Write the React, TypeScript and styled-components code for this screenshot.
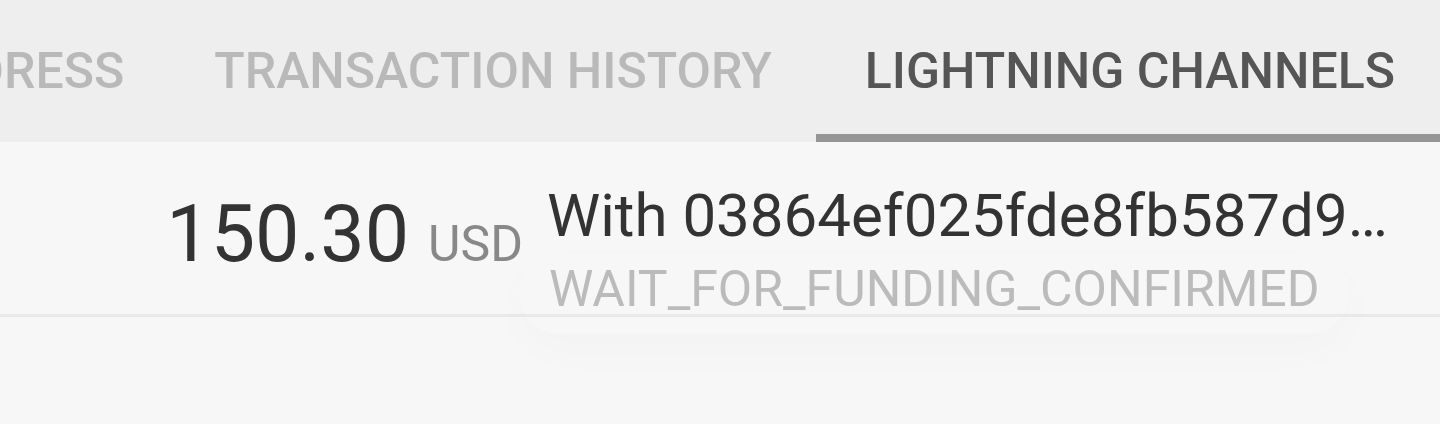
import React from "react";
import styled, { createGlobalStyle } from "styled-components";

const GlobalStyle = createGlobalStyle`
  html, body {
    margin: 0;
    padding: 0;
    background: #f7f7f7;
    font-family: Roboto, "Noto Sans", "Liberation Sans", sans-serif;
  }
  #root {
    width: 1440px;
    height: 424px;
    overflow: hidden;
  }
`;

const Screen = styled.div`
  width: 1440px;
  height: 424px;
  display: flex;
  flex-direction: column;
  background: #f7f7f7;
  overflow: hidden;
`;

const TabBar = styled.div`
  height: 142px;
  flex: none;
  display: flex;
  justify-content: flex-end;
  background: #eeeeee;
  overflow: hidden;
`;

const Tab = styled.div<{ $active?: boolean }>`
  flex: none;
  display: flex;
  align-items: flex-start;
  padding: 39px ${(p) => (p.$active ? 45 : 44)}px 0 ${(p) => (p.$active ? 49 : 46)}px;
  box-sizing: border-box;
  height: 142px;
  font-size: 50px;
  line-height: 64px;
  font-weight: 500;
  color: ${(p) => (p.$active ? "#555555" : "#b9b9b9")};
  border-bottom: 8px solid ${(p) => (p.$active ? "#959595" : "transparent")};
  white-space: nowrap;
`;

const Row = styled.div`
  display: flex;
  align-items: flex-start;
  padding-top: 39px;
  border-bottom: 3px solid #e9e9e9;
`;

const AmountCol = styled.div`
  width: 547px;
  flex: none;
  display: flex;
  justify-content: flex-end;
  align-items: baseline;
  padding-right: 24px;
  box-sizing: border-box;
  margin-top: 13px;
`;

const Amount = styled.span`
  font-size: 79px;
  line-height: 80px;
  color: #333333;
`;

const Unit = styled.span`
  font-size: 50px;
  line-height: 50px;
  color: #888888;
  margin-left: 19px;
`;

const InfoCol = styled.div`
  width: 854px;
  flex: none;
  display: flex;
  flex-direction: column;
  position: relative;
`;

const Title = styled.div`
  font-size: 60px;
  line-height: 70px;
  color: #333333;
  white-space: nowrap;
  overflow: hidden;
  text-overflow: ellipsis;
`;

const Status = styled.div`
  position: relative;
  margin-top: 13px;
  margin-left: 2px;
  font-size: 50px;
  line-height: 50px;
  color: #bbbbbb;
  white-space: nowrap;
  &::before {
    content: "";
    position: absolute;
    left: -30px;
    top: -10px;
    width: 830px;
    height: 80px;
    border-radius: 40px;
    box-shadow: 0 16px 48px rgba(0, 0, 0, 0.018);
    pointer-events: none;
  }
`;

export default function App() {
  return (
    <>
      <GlobalStyle />
      <Screen>
        <TabBar>
          <Tab>RECEIVE ADDRESS</Tab>
          <Tab>TRANSACTION HISTORY</Tab>
          <Tab $active>LIGHTNING CHANNELS</Tab>
        </TabBar>
        <Row>
          <AmountCol>
            <Amount>150.30</Amount>
            <Unit>USD</Unit>
          </AmountCol>
          <InfoCol>
            <Title>With 03864ef025fde8fb587d989186ce6a4a186895ee44a926bfc370e2c366597a3f8f</Title>
            <Status>WAIT_FOR_FUNDING_CONFIRMED</Status>
          </InfoCol>
        </Row>
      </Screen>
    </>
  );
}
